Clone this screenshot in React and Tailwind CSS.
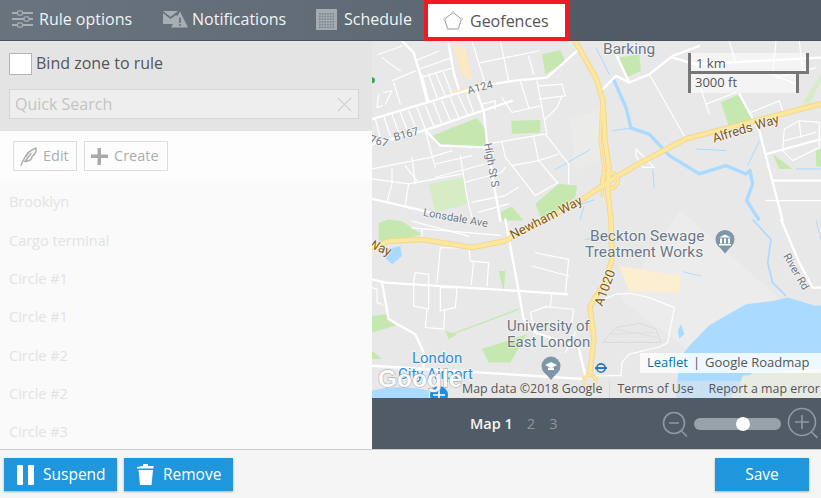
// Road sets are in 3x coordinates of each map quadrant
const Q_A = {
  major: [
    "M0,235 L230,165 L300,145 L370,128 L440,118 L525,110 L620,25",
    "M230,10 L245,95 L260,145",
    "M315,155 L335,210 L345,300 L365,430 L378,500 L385,540",
    "M90,0 L125,35 L150,120 L165,180",
    "M160,268 L205,315 L345,320",
    "M0,475 L130,505 L210,525",
    "M0,310 L75,290 L160,268 L330,210 L420,180",
  ],
  minor: [
    "M10,235L30,310","M35,225L60,300","M60,220L85,290","M85,215L110,280","M110,210L135,270","M135,200L160,265",
    "M160,195L185,255","M185,185L210,250","M210,180L235,240","M235,170L260,230","M260,165L285,220","M285,160L305,215",
    "M150,100L170,180","M170,100L195,170","M190,95L220,165","M215,95L240,160",
    "M20,40L90,15","M60,120L130,90","M65,125L85,190","M20,160L15,200L30,195","M35,155L60,150L40,190","M30,50L85,90",
    "M130,60L200,30","M140,85L240,50","M145,110L245,80",
    "M300,0L340,130","M325,65L500,30","M385,0L410,120","M470,45L485,100","M445,120L470,200",
    "M500,135L570,130L580,165L500,175","M570,165L555,200L520,235","M495,120L525,280",
    "M390,170L420,215L505,195","M330,190L370,180L370,205",
    "M345,310L520,280L590,370L590,430","M390,305L400,350L420,375L490,465L560,425","M485,290L500,360",
    "M420,375L500,360L560,340","M500,360L555,425","M400,380L390,395L280,425",
    "M0,385L175,350L240,330","M60,385L60,430L45,485","M100,375L135,420","M110,430L100,495",
    "M120,350L130,430","M160,270L190,380","M190,370L300,345","M190,410L340,370","M265,345L285,470L300,530",
    "M300,485L400,465L440,440","M320,515L410,490","M0,415L110,430L270,400",
  ],
};
const Q_B = {
  major: [
    "M0,180L40,190L440,215L585,225",
    "M30,190L50,300L130,345L155,400L155,450",
    "M400,0L440,215L455,300L490,340L620,385L640,470",
    "M0,440L320,460L640,480",
  ],
  minor: [
    "M205,85L195,190","M205,85L290,85L295,125L350,130L345,200","M305,125L298,195",
    "M125,185L130,160L170,165L170,270L125,260L125,185","M205,205L255,205L250,265L205,275L205,205",
    "M165,270L160,325L215,330L218,275",
    "M490,100L590,120L580,225","M480,140L590,170","M540,225L535,260","M475,280L520,262L605,270L600,310",
    "M475,280L490,340","M610,340L580,400","M120,5L290,50","M150,30L150,50","M120,25L385,48",
    "M0,205L15,210L15,250L30,255",
  ],
};
const Q_C = {
  major: ["M555,0L610,130L650,205L675,205"],
  minor: [
    "M0,250L60,225L100,222L160,235L235,265L215,370L195,382L100,405L78,430L75,470L0,470",
  ],
};
const Q_D = {
  major: [
    "M20,145L60,105L100,125L160,100L230,45L310,15",
    "M230,50L300,70L675,50",
    "M430,160L490,270L560,540",
    "M510,340L675,295",
    "M530,420L675,420",
    "M60,40L100,125",
  ],
  minor: [
    "M160,100L270,295","M310,130L340,220","M330,190L420,155","M465,215L550,180L560,210",
    "M565,265L610,240L670,245L670,320L590,360L560,330L565,265","M565,300L660,275","M610,245L615,290",
    "M120,325L175,380L140,380L120,345L120,325","M540,0L530,100L600,130","M400,0L420,70","M610,0L620,90","M540,110L660,80",
    "M510,480L675,480",
  ],
};

const Roads = ({ tx, ty, data }) => (
  <g transform={`translate(${tx} ${ty}) scale(0.3333)`} fill="none" stroke="#fff" strokeLinejoin="round" strokeLinecap="round">
    {data.minor.map((d, i) => <path key={i} d={d} strokeWidth="3.6" />)}
    {data.major.map((d, i) => <path key={i} d={d} strokeWidth="7" />)}
  </g>
);

const YELLOW = [
  "M372,248 L389,241.7 L422,240 L472,248 L505,241.6 L585,198 L610,181 L639,164 L686,139 L729,128 L821,104",
  "M575,41 L596,78 L603,101 L605,141 L609,168 L608,194 L611,221 L612,260 L605,283 L590,307 L594,340 L590,373",
  "M602,100 L600,141 L604,170 L602,196",
];

const Lbl = ({ x, y, r, size = 11, fill = "#6b7785", anchor = "middle", children }) => (
  <text
    x={x}
    y={y}
    textAnchor={anchor}
    fontSize={size}
    fontFamily="Roboto, sans-serif"
    fill={fill}
    stroke="#fff"
    strokeWidth="1.6"
    strokeOpacity="0.6"
    strokeLinejoin="round"
    className="[paint-order:stroke]"
    transform={r ? `rotate(${r} ${x} ${y})` : undefined}
  >
    {children}
  </text>
);

const MapDrawing = () => (
  <svg viewBox="372 41 449 358" className="block w-full h-full" preserveAspectRatio="none">
    <rect x="372" y="41" width="449" height="358" fill="#e8e8e8" />
    <path d="M680,210 L780,300 L700,360 L620,300 Z" fill="#ececec" />
    <path d="M570,120 L600,110 L600,160 L575,170 Z" fill="#ebebea" />
    <g transform="translate(372 41) scale(0.3333)">
      <path d="M180,285L315,232L340,265L340,318L205,310Z" fill="#c5e8b0" />
      <path d="M418,240L505,238L505,275L420,280Z" fill="#c5e8b0" />
      <path d="M170,430L275,410L290,490L190,515Z" fill="#d5ecc4" />
      <path d="M510,40L565,28L580,65L520,100Z" fill="#c5e8b0" />
      <path d="M385,515L420,498L455,540L390,540Z" fill="#c5e8b0" />
      <path d="M490,490L560,430L615,435L610,470L510,540Z" fill="#c5e8b0" />
      <path d="M240,10L280,20L300,120L270,100Z" fill="#fbe9c5" />
      <path d="M240,150L370,122L372,135L240,165Z" fill="#f7e6c2" />
      <circle cx="0" cy="118" r="9" fill="#34a853" />
    </g>
    <g transform="translate(372 220) scale(0.3333)">
      <path d="M20,10L50,0L90,5L150,45L50,70L20,65Z" fill="#c5e8b0" />
      <path d="M0,290L40,285L70,320L0,340Z" fill="#c5e8b0" />
      <path d="M330,390L465,345L415,430L350,430Z" fill="#c5e8b0" />
      <path d="M220,335L255,345L230,360Z" fill="#c5e8b0" />
      <path d="M240,345L440,270" stroke="#c5e8b0" strokeWidth="4" fill="none" />
      <path d="M380,155L400,155L395,220Z" fill="#c5e8b0" />
      <path d="M0,395L30,420L0,420Z" fill="#c5e8b0" />
      <path d="M40,90L85,80L90,110L60,135L40,115Z" fill="#aadaff" />
      <path d="M0,515Q80,495 170,515L170,540L0,540Z" fill="#aadaff" />
    </g>
    <g transform="translate(596 41) scale(0.3333)">
      <path d="M375,185L430,160L470,240L400,260Z" fill="#c5e8b0" />
      <path d="M70,50L130,40L135,90L90,110Z" fill="#c5e8b0" />
      <path d="M660,330L675,325L675,380L660,375Z" fill="#c5e8b0" />
      <path d="M620,185L675,100L675,120L640,190Z" fill="#d5ecc4" />
      <path d="M530,340L590,385L550,385Z" fill="#c5e8b0" />
      <path d="M50,110L90,200L105,262L160,280L220,345L310,400L390,375L450,400L462,390L470,430L452,480L490,540" fill="none" stroke="#aadaff" strokeWidth="10" strokeLinejoin="round" />
      <path d="M0,20L40,100M50,270L105,262M300,325L390,330M170,385L175,440M490,300L455,375M600,385L675,385" fill="none" stroke="#aadaff" strokeWidth="3" />
    </g>
    <g transform="translate(596 220) scale(0.3333)">
      <path d="M250,420L280,380L340,318L450,255L530,245L575,235L660,260L675,258L675,450L470,460L420,510L400,540L240,540Z" fill="#aadaff" />
      <path d="M470,0L525,60L515,130L530,190L570,230" fill="none" stroke="#aadaff" strokeWidth="5" />
      <path d="M660,0L675,60" fill="none" stroke="#aadaff" strokeWidth="3" />
      <path d="M255,315L265,345L250,358L245,335Z" fill="#aadaff" />
      <path d="M260,157L315,170" fill="none" stroke="#aadaff" strokeWidth="2.5" />
      <path d="M70,140L255,170L250,220L100,215Z" fill="#fcefd0" />
      <path d="M440,470L675,450L675,530L420,530Z" fill="#e6ecdf" />
      <path d="M20,370L60,325L130,312L180,330L195,370L100,370Z" fill="none" stroke="#cfd2d6" strokeWidth="2" />
      <path d="M45,345L175,340M60,330L185,355" fill="none" stroke="#d3d5d8" strokeWidth="1.5" />
    </g>
    <path d="M555,170 L590,150 M550,215 L595,200" stroke="#aadaff" strokeWidth="1" fill="none" />
    <path d="M584,207 L580,220 M585,240 L600,238" stroke="#aadaff" strokeWidth="1" fill="none" />

    <Roads tx={372} ty={41} data={Q_A} />
    <Roads tx={372} ty={220} data={Q_B} />
    <Roads tx={596} ty={220} data={Q_C} />
    <Roads tx={596} ty={41} data={Q_D} />

    <g fill="none" strokeLinejoin="round" strokeLinecap="round">
      {YELLOW.map((d, i) => <path key={i} d={d} stroke="#f2d68c" strokeWidth={i === 2 ? 3 : 5.6} />)}
      <circle cx="610" cy="181" r="8" stroke="#f2d68c" strokeWidth="4" />
      <circle cx="590" cy="382" r="6" stroke="#f2d68c" strokeWidth="3.6" />
      {YELLOW.map((d, i) => <path key={i} d={d} stroke="#fde79e" strokeWidth={i === 2 ? 1.6 : 3.8} />)}
      <circle cx="610" cy="181" r="8" stroke="#fde79e" strokeWidth="2.2" />
      <circle cx="590" cy="382" r="6" stroke="#fde79e" strokeWidth="2" />
    </g>

    <Lbl x={603} y={54} size={15.5} anchor="start">Barking</Lbl>
    <Lbl x={481} y={91} r={-15}>A124</Lbl>
    <Lbl x={407} y={138} r={-15}>B167</Lbl>
    <Lbl x={378} y={145} r={15}>767</Lbl>
    <Lbl x={488} y={166} r={80}>High St S</Lbl>
    <Lbl x={455} y={222} r={10}>Lonsdale Ave</Lbl>
    <Lbl x={548} y={222} r={-27} size={13} fill="#7c5a22">Newham Way</Lbl>
    <Lbl x={747} y={133} r={-17} size={13} fill="#7c5a22">Alfreds Way</Lbl>
    <Lbl x={378} y={252} r={22} size={13} fill="#7c5a22">Way</Lbl>
    <Lbl x={590} y={242} size={15.5} anchor="start">Beckton Sewage</Lbl>
    <Lbl x={585} y={258} size={15.5} anchor="start">Treatment Works</Lbl>
    <Lbl x={609} y={290} r={-70} size={13} fill="#7c5a22">A1020</Lbl>
    <Lbl x={507} y={332} size={15} anchor="start">University of</Lbl>
    <Lbl x={507} y={348} size={15} anchor="start">East London</Lbl>
    <Lbl x={412} y={364} size={15} fill="#2d8fd5" anchor="start">London</Lbl>
    <Lbl x={398} y={380} size={15} fill="#2d8fd5" anchor="start">City Airport</Lbl>
    <Lbl x={793} y={274} r={60} size={11}>River Rd</Lbl>

    <g>
      <circle cx="551" cy="367" r="9.5" fill="#7d96a8" />
      <path d="M545,374 L551,381 L557,374Z" fill="#7d96a8" />
      <path d="M545,366 L551,363 L557,366 L551,369Z" fill="#fff" />
      <path d="M548,368.5 V371 H554 V368.5" fill="#fff" />
      <circle cx="725" cy="240" r="9.5" fill="#7d96a8" />
      <path d="M719,247 L725,254 L731,247Z" fill="#7d96a8" />
      <path d="M719,238 L725,235 L731,238Z M720,239h2v5h-2z M724,239h2v5h-2z M728,239h2v5h-2z M719,244.5h12v1.5h-12z" fill="#fff" />
      <circle cx="601" cy="369" r="4.2" fill="none" stroke="#2a76b9" strokeWidth="1.6" />
      <rect x="595" y="368" width="12" height="2" fill="#2a76b9" />
      <circle cx="439" cy="396" r="9" fill="#1a8fe0" />
      <path d="M439,389 V402 M433,396 H445" stroke="#fff" strokeWidth="1.6" />
    </g>

    <text x="378" y="388" fontSize="24.5" fontWeight="700" fontFamily="Liberation Sans, sans-serif" fill="#fff" fillOpacity="0.92" stroke="#9a9a9a" strokeWidth="0.8" className="[paint-order:stroke]">Google</text>
  </svg>
);

const Sliders = () => (
  <svg width="21" height="20" viewBox="0 0 21 20" fill="none">
    <g stroke="#a7aeb4" strokeWidth="2">
      <path d="M0 4H21M0 10H21M0 16H21" />
    </g>
    <g fill="#69747f" stroke="#a7aeb4" strokeWidth="1.3">
      <rect x="5.5" y="1.8" width="5" height="4.4" rx="1.5" />
      <rect x="12" y="7.8" width="5" height="4.4" rx="1.5" />
      <rect x="5.5" y="13.8" width="5" height="4.4" rx="1.5" />
    </g>
  </svg>
);

const Mail = () => (
  <svg width="25" height="17" viewBox="0 0 25 17">
    <path d="M0 0H15L7.5 6Z" fill="#a7aeb4" />
    <path d="M0 2L7.5 8L13 4L16.5 6.5L10.5 13H0Z" fill="#a7aeb4" />
    <path d="M17 0.5L25 16.5H8Z" fill="#a7aeb4" />
    <rect x="16" y="6.5" width="1.8" height="5.5" fill="#69747f" />
    <rect x="16" y="13" width="1.8" height="1.8" fill="#69747f" />
  </svg>
);

const Calendar = () => {
  const dots = [];
  for (let r = 0; r < 6; r++) for (let c = 0; c < 6; c++) dots.push(<rect key={`${r}-${c}`} x={3 + c * 2.7} y={4 + r * 2.7} width="1.6" height="1.6" fill="#7a848e" />);
  return (
    <svg width="21" height="21" viewBox="0 0 21 21">
      <rect width="21" height="21" fill="#a4abb2" />
      {dots}
    </svg>
  );
};

const Pentagon = () => (
  <svg width="20" height="20" viewBox="0 0 20 20" fill="none">
    <path d="M10 1.5L18.5 8L15.2 18H4.8L1.5 8Z" stroke="#9a9a9a" strokeWidth="1" />
    <g fill="#fff" stroke="#b0b0b0" strokeWidth="0.6">
      <circle cx="10" cy="1.5" r="1" /><circle cx="18.5" cy="8" r="1" /><circle cx="15.2" cy="18" r="1" /><circle cx="4.8" cy="18" r="1" /><circle cx="1.5" cy="8" r="1" />
    </g>
  </svg>
);

const Pen = () => (
  <svg width="18" height="19" viewBox="0 0 18 19" fill="none" stroke="#adadad" strokeWidth="1.5" strokeLinecap="round" strokeLinejoin="round">
    <path d="M1 18L4.5 11C7 6 11 3 16 1C16.5 5 14 8 12 9.5C12 12 9.5 14.5 5 14.5" />
    <path d="M5 14.5L11 6.5" />
    <path d="M6.5 9L8 5.5" />
  </svg>
);

const Trash = () => (
  <svg width="19" height="21" viewBox="0 0 19 21" fill="#fff">
    <path d="M7 0H12V2H17.5V4.6H1V3L7 2Z" />
    <path d="M2.5 6H17L15.5 21H4Z" />
  </svg>
);

const Tab = ({ icon, label, className }) => (
  <div className={`flex items-center h-full text-[16px] text-[#f1f3f4] ${className}`}>
    {icon}
    <span>{label}</span>
  </div>
);

export default function App() {
  const rows = ["Brooklyn", "Cargo terminal", "Circle #1", "Circle #1", "Circle #2", "Circle #2", "Circle #3"];
  return (
    <div className="w-[821px] h-[498px] flex flex-col overflow-hidden bg-[#f5f5f5] font-['Open_Sans',sans-serif]">
      <div className="h-[41px] shrink-0 flex bg-[#515b65] border-b border-[#4a535c]">
        <div className="w-[424px] h-full flex bg-gradient-to-r from-[#69747f] to-[#5f6974]">
          <Tab className="pl-3 gap-[6px] w-[163px] -mt-px" icon={<Sliders />} label="Rule options" />
          <Tab className="gap-[4px] w-[153px] -mt-px" icon={<Mail />} label="Notifications" />
          <Tab className="gap-[7px] -mt-px" icon={<Calendar />} label="Schedule" />
        </div>
        <div className="w-[145px] h-[41px] shrink-0 bg-white border-4 border-[#ed1c24] flex items-center pl-[15px] gap-[7px] text-[16px] text-[#555]">
          <Pentagon />
          <span>Geofences</span>
        </div>
      </div>

      <div className="flex-1 min-h-0 flex">
        <div className="w-[372px] shrink-0 flex flex-col bg-[#fafafa]">
          <div className="h-[90px] shrink-0 bg-[#e4e4e4] px-[9px] pt-3">
            <label className="flex items-center gap-[4px] h-[22px] text-[16px] text-[#555]">
              <span className="w-[23px] h-[22px] bg-white border border-[#b5b5b5]" />
              <span className="-mt-[2px]">Bind zone to rule</span>
            </label>
            <div className="mt-[14px] w-[350px] h-[30px] bg-[#eeeeee] border border-[#d6d6d6] flex items-center justify-between pl-[5px] pr-[6px] text-[16px] text-[#c4c4c4]">
              <span>Quick Search</span>
              <svg width="15" height="15" viewBox="0 0 15 15" stroke="#d2d2d2" strokeWidth="1.1"><path d="M1 1L14 14M14 1L1 14" /></svg>
            </div>
          </div>
          <div className="h-[50px] shrink-0 bg-[#fcfdfc] pl-[13px] pt-[10px] flex gap-[7px]">
            <div className="w-[64px] h-[30px] border border-[#dcdcdc] flex items-center pl-[6px] gap-[5px] text-[14.5px] text-[#adadad]">
              <Pen />
              <span>Edit</span>
            </div>
            <div className="w-[84px] h-[30px] border border-[#dcdcdc] flex items-center pl-[6px] gap-[6px] text-[14.5px] text-[#adadad]">
              <svg width="17" height="17" viewBox="0 0 17 17" fill="#a9a9a9"><path d="M6.5 0H10V6.5H17V10H10V17H6.5V10H0V6.5H6.5Z" /></svg>
              <span>Create</span>
            </div>
          </div>
          <div className="flex-1 min-h-0 overflow-hidden pt-[2px] text-[14.5px] text-[#e3e3e3]">
            {rows.map((r, i) => (
              <div key={i} className="h-[38.33px] flex items-center pl-[9px]">{r}</div>
            ))}
          </div>
        </div>

        <div className="flex-1 min-w-0 flex flex-col">
          <div className="relative h-[357px] shrink-0 overflow-hidden">
            <MapDrawing />
            <div className="absolute left-[316px] top-[12px] text-[13px] leading-none text-[#555]">
              <div className="w-[121px] h-[21px] border-[3px] border-t-0 border-[#777] bg-white/50 pl-[5px] pt-[4px]">1 km</div>
              <div className="w-[111px] h-[19px] border-[3px] border-t-0 border-b-0 border-[#777] bg-white/50 pl-[4px] pt-[2px]">3000 ft</div>
            </div>
            <div className="absolute right-0 top-[312px] h-[20px] w-[181px] bg-white/80 flex items-center pl-[7px] text-[13px] text-[#555] whitespace-nowrap">
              <span className="text-[#0078a8]">Leaflet</span>
              <span className="mx-[5px]">|</span>
              <span>Google Roadmap</span>
            </div>
            <div className="absolute right-0 bottom-0 h-[17px] w-[359px] flex items-center text-[12.4px] text-[#555] whitespace-nowrap bg-[#e8e8e8]/50">
              <span className="pr-[7px] border-r border-[#d8d8d8] h-full flex items-center">Map data ©2018 Google</span>
              <span className="px-[7px] border-r border-[#d8d8d8] h-full flex items-center">Terms of Use</span>
              <span className="pl-[7px]">Report a map error</span>
            </div>
          </div>
          <div className="flex-1 bg-[#515b65] flex items-center relative">
            <div className="ml-[98px] flex items-center gap-[14px] text-[14.5px]">
              <span className="font-semibold text-[#f4f5f6]">Map 1</span>
              <span className="text-[#8c96a0]">2</span>
              <span className="text-[#8c96a0]">3</span>
            </div>
            <div className="absolute left-[290px] top-[9px] flex items-center">
              <svg width="26" height="28" viewBox="0 0 26 28" fill="none" stroke="#8f99a3" strokeWidth="1.6">
                <circle cx="12" cy="13" r="10.5" />
                <path d="M7 13H17M19.5 21L25 26.5" />
              </svg>
              <div className="relative ml-[6px] w-[87px] h-[12px] rounded-full bg-[#98a2ab]">
                <div className="absolute left-[42px] top-[-1px] w-[14px] h-[14px] rounded-full bg-white" />
              </div>
              <svg className="ml-[6px]" width="31" height="33" viewBox="0 0 31 33" fill="none" stroke="#8f99a3" strokeWidth="1.6">
                <circle cx="15" cy="15" r="13.5" />
                <path d="M8 15H22M15 8V22M24.5 25L30.5 31" />
              </svg>
            </div>
          </div>
        </div>
      </div>

      <div className="h-[49px] shrink-0 bg-[#f5f5f5] border-t border-[#cccccc] pl-1 pr-3 pt-2 flex text-[15.5px] text-white">
        <div className="w-[113px] h-[33px] bg-[#2096dc] shadow-[0_1px_2px_rgba(0,0,0,0.3)] flex items-center pl-[13px] gap-[9px]">
          <svg width="17" height="20" viewBox="0 0 17 20" fill="#fff"><rect x="0" width="6" height="20" rx="1" /><rect x="11" width="6" height="20" rx="1" /></svg>
          <span>Suspend</span>
        </div>
        <div className="ml-[7px] w-[109px] h-[33px] bg-[#2096dc] shadow-[0_1px_2px_rgba(0,0,0,0.3)] flex items-center pl-[12px] gap-[8px]">
          <Trash />
          <span>Remove</span>
        </div>
        <div className="ml-auto w-[94px] h-[33px] bg-[#2096dc] shadow-[0_1px_2px_rgba(0,0,0,0.3)] flex items-center justify-center">
          Save
        </div>
      </div>
    </div>
  );
}
